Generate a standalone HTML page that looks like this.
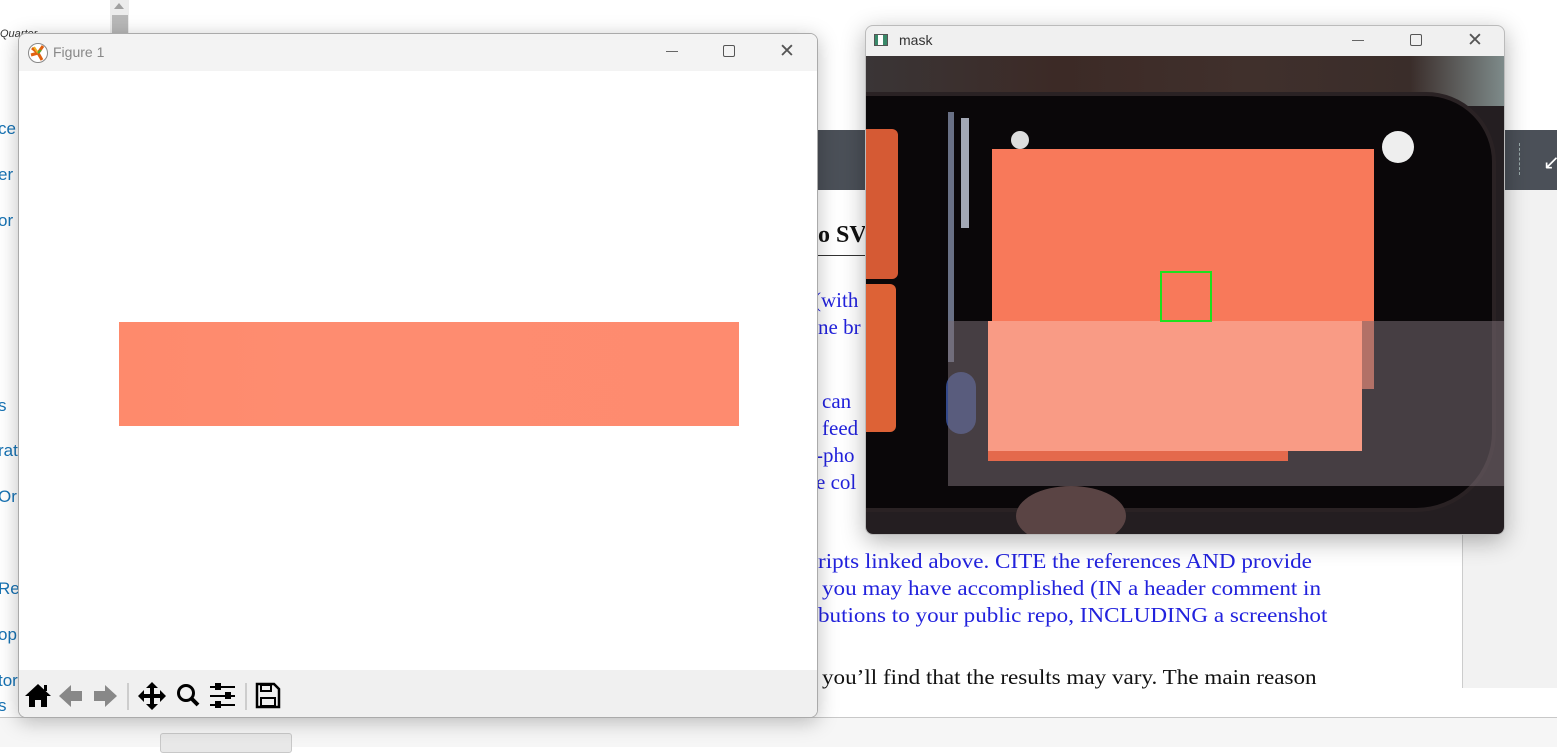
<!DOCTYPE html>
<html><head><meta charset="utf-8">
<style>
*{margin:0;padding:0;box-sizing:border-box}
body{width:1557px;height:747px;overflow:hidden;background:#fff;position:relative;font-family:"Liberation Sans",sans-serif}
.a{position:absolute}
.side{color:#1672b3;font-size:17px;left:-2px}
.doc{font-family:"Liberation Serif",serif;font-size:21px;color:#2222dd;white-space:nowrap;transform:scaleX(1.0);transform-origin:left top}
.ln{transform:scaleX(1.1)}
</style></head><body>
<div class="a" style="left:0;top:28px;font-size:11px;font-style:italic;color:#333">Quarter</div>
<div class="a side" style="top:119px">ce</div>
<div class="a side" style="top:165px">er</div>
<div class="a side" style="top:211px">or</div>
<div class="a side" style="top:396px">s</div>
<div class="a side" style="top:441px">rat</div>
<div class="a side" style="top:487px">Or</div>
<div class="a side" style="top:579px">Res</div>
<div class="a side" style="top:625px">op</div>
<div class="a side" style="top:671px">tor</div>
<div class="a side" style="top:696px">s</div>
<div class="a" style="left:110px;top:0;width:19px;height:747px;background:#ececec"></div>
<div class="a" style="left:112px;top:15px;width:16px;height:732px;background:#b8b8b8"></div>
<div class="a" style="left:114px;top:3px;width:0;height:0;border-left:5px solid transparent;border-right:5px solid transparent;border-bottom:6px solid #a0a0a0"></div>
<div class="a" style="left:818px;top:130px;width:739px;height:60px;background:#4b5058"></div>
<div class="a" style="left:1519px;top:143px;height:32px;border-left:1px dashed #9aa"></div>
<div class="a" style="left:1543px;top:150px;color:#fff;font-size:20px">↙</div>
<div class="a" style="left:1462px;top:190px;width:95px;height:498px;background:#f2f2f2;border-left:1px solid #ccc"></div>
<div class="a" style="left:0;top:717px;width:1557px;height:30px;background:#f6f6f6;border-top:1px solid #c8c8c8"></div>
<div class="a" style="left:160px;top:733px;width:132px;height:20px;background:#e8e8e8;border:1px solid #c8c8c8;border-radius:3px"></div>
<div class="a" style="left:818px;top:222px;font-family:'Liberation Serif',serif;font-size:24px;font-weight:bold;color:#111">o SV</div>
<div class="a" style="left:818px;top:255px;width:50px;border-top:1px solid #333"></div>
<div class="a doc" style="left:814px;top:288px">(with</div>
<div class="a doc" style="left:818px;top:315px">ne br</div>
<div class="a doc" style="left:822px;top:389px">can</div>
<div class="a doc" style="left:822px;top:416px">feed</div>
<div class="a doc" style="left:816px;top:443px">-pho</div>
<div class="a doc" style="left:816px;top:470px">e col</div>
<div class="a doc ln" style="left:818px;top:549px">ripts linked above.  CITE the references AND provide</div>
<div class="a doc ln" style="left:822px;top:576px">you may have accomplished (IN a header comment in</div>
<div class="a doc ln" style="left:818px;top:603px">butions to your public repo, INCLUDING a screenshot</div>
<div class="a doc ln" style="left:822px;top:665px;color:#111">you’ll find that the results may vary.  The main reason</div>

<div class="a" style="left:18px;top:33px;width:800px;height:685px;background:#fff;border:1px solid #aaa;border-radius:8px;overflow:hidden;box-shadow:0 4px 20px rgba(0,0,0,.25)">
  <div class="a" style="left:0;top:0;width:800px;height:37px;background:#f3f3f3"></div>
  <svg class="a" style="left:8px;top:8px" width="22" height="22" viewBox="0 0 22 22"><circle cx="11" cy="11" r="9.5" fill="#fff" stroke="#888"/><path d="M11 11L5 6M11 11L16 4M11 11L4 13M11 11L15 18" stroke="#e06010" stroke-width="3"/><path d="M11 11L7 5" stroke="#f0b020" stroke-width="2"/><path d="M11 11L14 8" stroke="#5a3" stroke-width="2"/></svg>
  <div class="a" style="left:34px;top:10px;font-size:14px;color:#888">Figure 1</div>
  <div class="a" style="left:647px;top:17px;width:12px;border-top:1px solid #666"></div>
  <div class="a" style="left:704px;top:11px;width:12px;height:12px;border:1px solid #555;border-radius:2px"></div>
  <div class="a" style="left:760px;top:6px;font-size:19px;color:#555;font-weight:300">✕</div>
  <div class="a" style="left:100px;top:288px;width:620px;height:104px;background:linear-gradient(90deg,#fe8a6c,#fe8c70 30%,#fe8b6f)"></div>
  <div class="a" style="left:0;top:636px;width:800px;height:49px;background:#f0f0f0"></div>
  <svg class="a" style="left:0;top:636px" width="280" height="49" viewBox="0 0 280 49">
    <path d="M6 26L19 14L32 26H28V37H22V30H16V37H10V26Z" fill="#000"/><rect x="25" y="15" width="3" height="6" fill="#000"/>
    <path d="M40 26L52 15V21H63V31H52V37Z" fill="#888"/>
    <path d="M98 26L86 15V21H75V31H86V37Z" fill="#888"/>
    <line x1="109" y1="13" x2="109" y2="40" stroke="#aaa"/>
    <path d="M133 12L139 18H135V24H141V20L147 26L141 32V28H135V34H139L133 40L127 34H131V28H125V32L119 26L125 20V24H131V18H127Z" fill="#000"/>
    <circle cx="167" cy="23" r="7.5" fill="none" stroke="#000" stroke-width="3"/><path d="M172 28L179 35" stroke="#000" stroke-width="4"/>
    <path d="M191 17H216M191 26H216M191 35H216" stroke="#000" stroke-width="2"/><rect x="196" y="13" width="6" height="7" fill="#000"/><rect x="206" y="22" width="6" height="7" fill="#000"/><rect x="196" y="31" width="6" height="7" fill="#000"/>
    <line x1="227" y1="13" x2="227" y2="40" stroke="#aaa"/>
    <path d="M238 14H255L260 19V37H238Z" fill="none" stroke="#000" stroke-width="2.5"/><rect x="242" y="15" width="10" height="6" fill="none" stroke="#000" stroke-width="2"/><rect x="242" y="28" width="14" height="8" fill="none" stroke="#000" stroke-width="2"/>
  </svg>
</div>

<div class="a" style="left:865px;top:25px;width:640px;height:510px;background:#f0f0f0;border:1px solid #bbb;border-radius:8px;overflow:hidden;box-shadow:0 6px 24px rgba(0,0,0,.3)">
  <div class="a" style="left:8px;top:8px;width:14px;height:12px;background:#3a8a6a;border:1px solid #555"></div>
  <div class="a" style="left:12px;top:9px;width:5px;height:10px;background:#fff"></div>
  <div class="a" style="left:33px;top:6px;font-size:14px;color:#333">mask</div>
  <div class="a" style="left:486px;top:14px;width:12px;border-top:1px solid #666"></div>
  <div class="a" style="left:544px;top:8px;width:12px;height:12px;border:1px solid #555;border-radius:2px"></div>
  <div class="a" style="left:601px;top:3px;font-size:19px;color:#555">✕</div>
  <div class="a" style="left:0;top:30px;width:640px;height:480px;background:#241e21;overflow:hidden">
    <div class="a" style="left:0;top:0;width:640px;height:50px;background:linear-gradient(90deg,#3a3536,#3c2a26 30%,#40302c 60%,#3a2d2a 85%,#7f8c8c)"></div>
    <div class="a" style="left:-20px;top:36px;width:650px;height:420px;background:#0a0709;border-radius:20px 70px 80px 20px;border:4px solid #2a2224"></div>
    <div class="a" style="left:0;top:73px;width:32px;height:150px;background:#d55a34;border-radius:0 6px 6px 0"></div>
    <div class="a" style="left:0;top:228px;width:30px;height:148px;background:#dd6236;border-radius:0 6px 6px 0"></div>
    <div class="a" style="left:82px;top:56px;width:6px;height:250px;background:#a8b8d8;opacity:.6"></div>
    <div class="a" style="left:95px;top:62px;width:8px;height:110px;background:#c8d0e0;opacity:.8"></div>
    <div class="a" style="left:80px;top:316px;width:30px;height:62px;background:#34498a;border-radius:15px"></div>
    <div class="a" style="left:126px;top:93px;width:382px;height:240px;background:#f8795a"></div>
    <div class="a" style="left:145px;top:75px;width:18px;height:18px;border-radius:50%;background:#ddd"></div>
    <div class="a" style="left:516px;top:75px;width:32px;height:32px;border-radius:50%;background:#eee"></div>
    <div class="a" style="left:82px;top:265px;width:558px;height:165px;background:rgba(120,108,114,.55)"></div>
    <div class="a" style="left:122px;top:265px;width:374px;height:130px;background:#f99b85"></div>
    <div class="a" style="left:122px;top:395px;width:300px;height:10px;background:#e4694c"></div>
    <div class="a" style="left:150px;top:430px;width:110px;height:60px;background:#5a4444;border-radius:50%"></div>
    <div class="a" style="left:294px;top:215px;width:52px;height:51px;border:2px solid #1ee01e"></div>
  </div>
</div>
</body></html>
